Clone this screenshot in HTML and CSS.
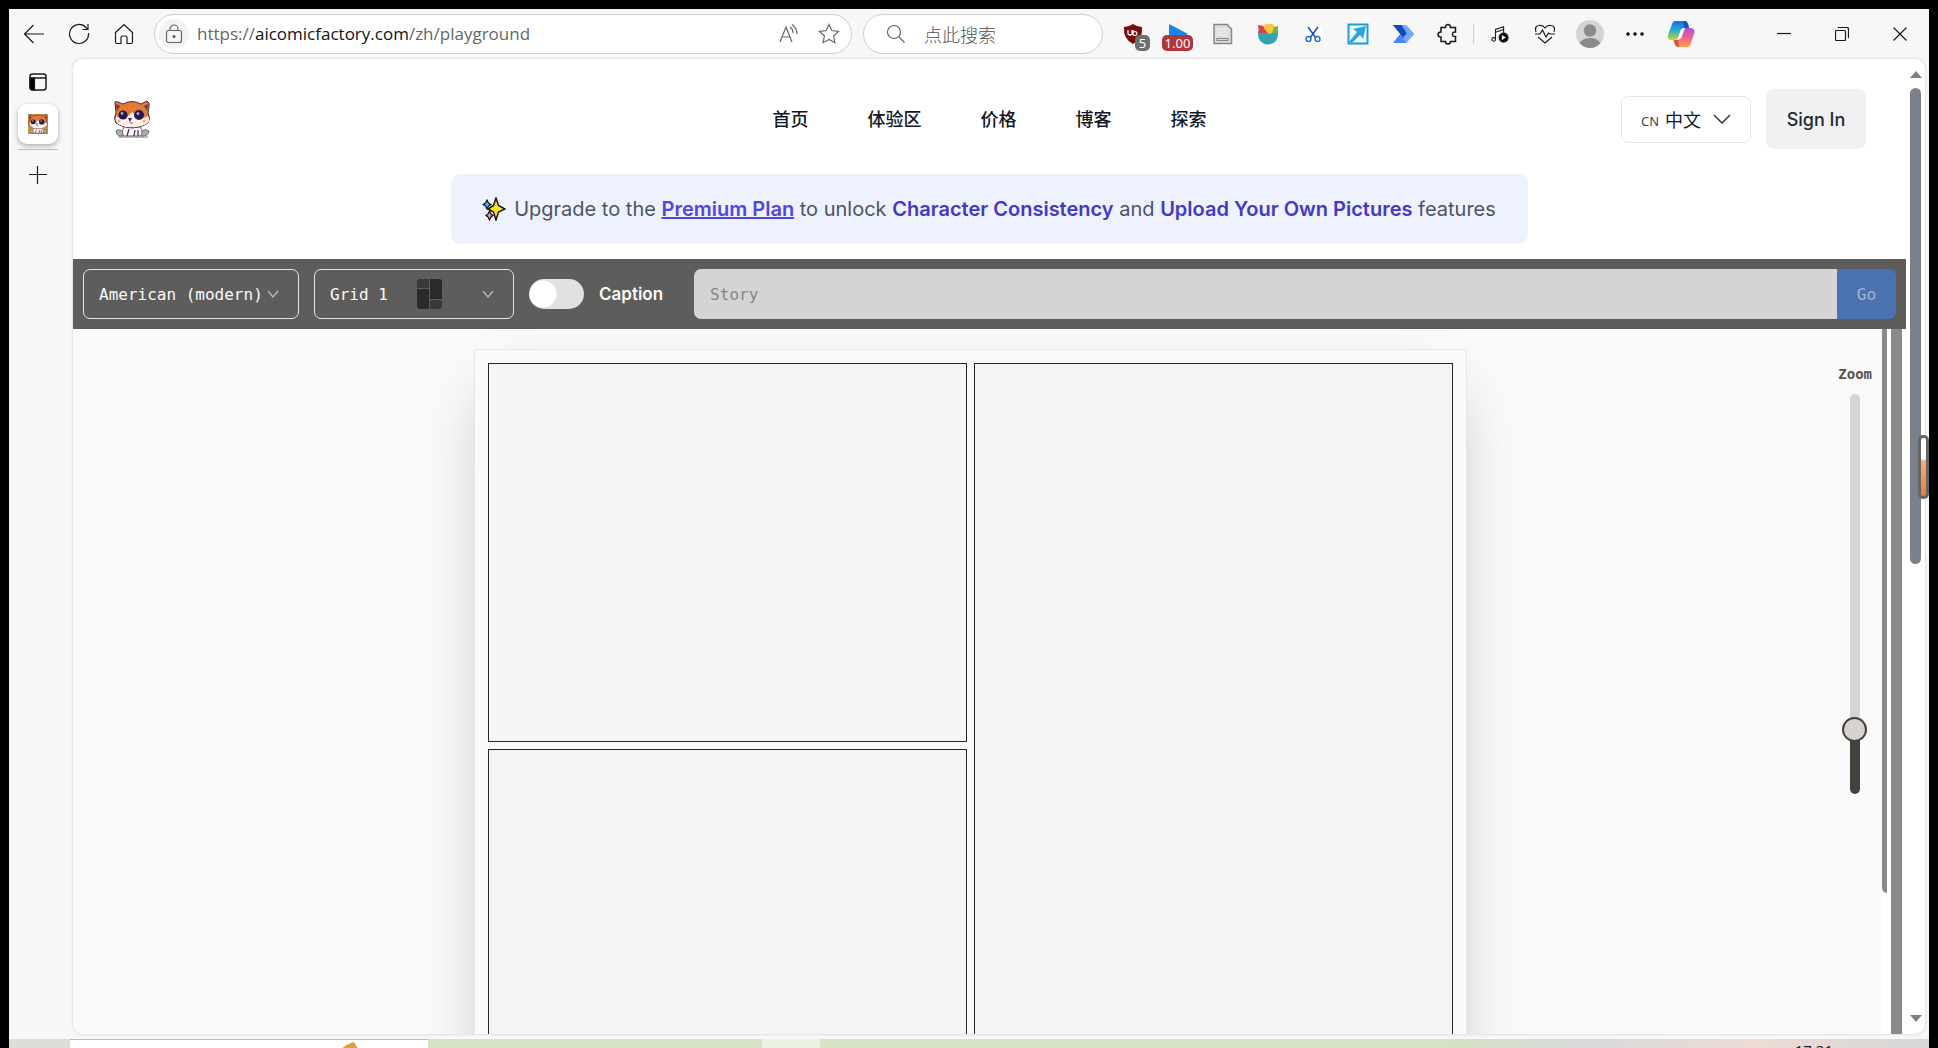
FILE: index.html
```html
<!DOCTYPE html>
<html lang="zh">
<head>
<meta charset="utf-8">
<title>AI Comic Factory</title>
<link rel="stylesheet" href="styles.css">
</head>
<body>
<svg class="defs" aria-hidden="true">
  <symbol id="cat" viewBox="0 0 38 38">
    <path d="M10 36Q4 37 3 31Q6 28 10 32ZM28 36Q35 37 36 31Q32 28 28 32Z" fill="#a9b3ae" stroke="#5d5870" stroke-width=".8"/>
    <path d="M11 26Q8 34 11 36H27Q31 34 27 26Z" fill="#fdf6f4" stroke="#6b5368" stroke-width=".9"/>
    <path d="M16 29L14 36M22 30L21 36M25 30V36" stroke="#342a5c" stroke-width="1.2" fill="none"/>
    <path d="M2 3Q1 1 5 2L10 4Q19 -1 28 4L34 1Q37 2 36 7L35 13Q38 19 35 23Q28 28 19 28Q10 28 3 23Q0 19 3 13Z" fill="#e27b36" stroke="#4b2b44" stroke-width="1"/>
    <path d="M3 4L7 6L4 11ZM35 4L31 6L34 11Z" fill="#66394c" stroke="none"/>
    <path d="M3 16Q7 19 13 18L19 12L25 18Q31 19 35 16Q38 21 33 24Q26 28 19 27Q10 28 4 23Q2 20 3 16Z" fill="#fff0ea" stroke="none"/>
    <circle cx="10" cy="15" r="4.6" fill="#26194d" stroke="none"/><circle cx="26" cy="15" r="5" fill="#26194d" stroke="none"/>
    <circle cx="9" cy="13.5" r="1.4" fill="#a8a3d8" stroke="none"/><circle cx="25" cy="13.5" r="1.5" fill="#a8a3d8" stroke="none"/>
    <path d="M15 18H19L17 22Z" fill="#39265b" stroke="none"/><path d="M17 22Q17 24 20 23" stroke="#754052" stroke-width=".8" fill="none"/>
    <circle cx="6" cy="21" r="1.5" fill="#f5a29d" stroke="none"/><circle cx="31" cy="21" r="1.5" fill="#f5a29d" stroke="none"/>
    <path d="M5 37H35" stroke="#8b7282" stroke-width="1"/>
  </symbol>
</svg>

<div class="browser">
  <header class="toolbar">
    <button class="tool" aria-label="Back"><svg width="22" height="22" viewBox="0 0 22 22"><path d="M21 11H1.500M10.500 2L1.500 11L10.500 20"/></svg></button>
    <button class="tool" aria-label="Reload"><svg width="22" height="22" viewBox="0 0 22 22"><path d="M20.500 10A9.500 9.500 0 1 1 18 4.500L20 6.500M20 1V6.500H14.500"/></svg></button>
    <button class="tool" aria-label="Home"><svg width="22" height="22" viewBox="0 0 22 22"><path d="M2.500 9.500L11 1.500L19.500 9.500V19Q19.500 20.500 18 20.500H14V14.500Q14 13 12.500 13H9.500Q8 13 8 14.500V20.500H4Q2.500 20.500 2.500 19Z"/></svg></button>
    <div class="address">
      <span class="lock"><svg width="18" height="20" viewBox="0 0 18 20"><rect x="1.500" y="6.500" width="15" height="12" rx="2"/><path d="M5 6.500V5A4 4 0 0 1 13 5V6.500"/><circle cx="9" cy="12.500" r="1" class="solid"/></svg></span>
      <div class="url">https://<b>aicomicfactory.com</b>/zh/playground</div>
      <button class="inbar" aria-label="Read aloud"><svg width="22" height="22" viewBox="0 0 22 22"><path d="M2 19L8 4L14 19M4 14H12M12 4Q15 6 15 10M14 1.500Q19 5 19 11"/></svg></button>
      <button class="inbar" aria-label="Favorite"><svg width="22" height="22" viewBox="0 0 22 22"><path d="M11 1.500L13.800 7.500L20.500 8.400L15.600 13L16.900 19.700L11 16.500L5.100 19.700L6.400 13L1.500 8.400L8.200 7.500Z"/></svg></button>
    </div>
    <label class="search">
      <svg width="20" height="20" viewBox="0 0 20 20"><circle cx="8" cy="8" r="6.500"/><path d="M13 13L18.500 18.500"/></svg>
      <input type="search" placeholder="点此搜索" aria-label="点此搜索">
    </label>
    <div class="extensions">
      <button class="tool" aria-label="uBlock"><svg width="20" height="22" viewBox="0 0 20 22"><path d="M10 1Q14 4 19 4Q20 16 10 21Q0 16 1 4Q6 4 10 1Z" fill="#7d0a0d" stroke="none"/><path d="M5 7V11Q7 13 9 11V7M10 7V12M10 10A2 2 0 1 0 12 8.500Q10 8.500 10 10" stroke="#fff"/></svg><span class="badge grey">5</span></button>
      <button class="tool" aria-label="Video speed"><svg width="20" height="22" viewBox="0 0 20 22"><path d="M1 1L20 11L1 21Z" fill="#1587ee" stroke="none"/></svg><span class="badge red">1.00</span></button>
      <button class="tool" aria-label="Reader"><svg width="20" height="22" viewBox="0 0 20 22"><path d="M1 1.500H14L18.500 6V20.500H1Z" fill="#dedede" stroke="#888" stroke-width="1.500"/><path d="M4 6H14M4 9H15M4 12H15" stroke="#f4f4f4"/><path d="M4 15.500H15V17.500H4Z" stroke="#888" fill="none"/></svg></button>
      <button class="tool" aria-label="Palette"><svg width="22" height="22" viewBox="0 0 22 22"><path d="M1 8H21Q22 21 11 21.500Q0 21 1 8Z" fill="#32a3b2" stroke="none"/><path d="M1 2L7 3L11 10L2 10Z" fill="#da3f43" stroke="none"/><path d="M6 3Q12 -2 18 3V9L12 11L8 7Z" fill="#f9c83d" stroke="none"/><path d="M17 4L21 3V10L15 10Z" fill="#6eb454" stroke="none"/></svg></button>
      <button class="tool" aria-label="Snip"><svg width="22" height="22" viewBox="0 0 22 22"><rect x="3" y="3" width="17" height="17" fill="#fff" stroke="none"/><path d="M6 4L14 15M16 4L8 15" stroke="#1d4fc0" stroke-width="1.500"/><circle cx="6.500" cy="16" r="2.500" stroke="#2770df" stroke-width="1.500"/><circle cx="15.500" cy="16" r="2.500" stroke="#2770df" stroke-width="1.500"/></svg></button>
      <button class="tool" aria-label="Open in window"><svg width="22" height="22" viewBox="0 0 22 22"><rect x="1.500" y="1.500" width="19" height="19" fill="#effbff" stroke="#239bd6" stroke-width="2"/><path d="M19 3L16 16L13 12L5 20L2 19L10 9L6 6Z" fill="#27a7dc" stroke="none"/></svg></button>
      <button class="tool" aria-label="Automate"><svg width="22" height="20" viewBox="0 0 22 20"><path d="M1 1H14L22 10L14 19H1L8 10Z" fill="#4a87f4" stroke="none"/><path d="M1 1H9L15 9L11 13Z" fill="#1746b7" stroke="none"/><path d="M14 1L22 10L14 19L11 15L15 10L10 1Z" fill="#75a8fb" stroke="none"/></svg></button>
      <button class="tool" aria-label="Extensions"><svg class="bold" width="22" height="22" viewBox="0 0 22 22"><path d="M4 4.500H8.500Q8.500 1.500 11 1.500Q13.500 1.500 13.500 4.500H18.500V9Q15.500 8.500 15.500 11.500Q15.500 14 18.500 13.500V18.500H13.500Q13.500 21 11 21Q8.500 21 8.500 18.500H4V14Q1 14 1 11.500Q1 9 4 9Z"/></svg></button>
    </div>
    <span class="divider"></span>
    <button class="tool" aria-label="Media"><svg width="18" height="18" viewBox="0 0 20 20"><path d="M5 16V5L14 2V9M5 8L14 5"/><circle cx="3" cy="16" r="2"/><circle cx="14" cy="14" r="5" class="black"/><path d="M12 11L16.500 14L12 17Z" fill="#fff" stroke="none"/></svg></button>
    <button class="tool" aria-label="Performance"><svg width="22" height="20" viewBox="0 0 22 20" stroke-width="1.4"><path d="M2 8Q0 2 5 1.500Q9 1 11 4Q13 1 17 1.500Q22 2 20 8M1 10H6L8.500 6L12 13L14.500 9L16 10H21M4 13L11 19L18 13"/></svg></button>
    <button class="tool" aria-label="Profile"><svg width="28" height="28" viewBox="0 0 28 28"><circle cx="14" cy="14" r="14" fill="#d5d4d3" stroke="none"/><circle cx="14" cy="10.500" r="6.200" fill="#8c8b89" stroke="none"/><path d="M3.500 23Q7 18 14 18Q21 18 24.500 23Q20 28 14 28Q8 28 3.500 23Z" fill="#8c8b89" stroke="none"/></svg></button>
    <button class="tool" aria-label="Settings"><svg width="20" height="6" viewBox="0 0 20 6"><g class="black"><circle cx="3" cy="3" r="1.200"/><circle cx="10" cy="3" r="1.200"/><circle cx="17" cy="3" r="1.200"/></g></svg></button>
    <button class="tool copilot" aria-label="Copilot">
      <svg width="28" height="28" viewBox="0 0 28 28">
        <defs>
          <linearGradient id="cool" x1="0" y1="0" x2="0" y2="1"><stop offset="0" stop-color="#176fe0"/><stop offset=".5" stop-color="#23b0cf"/><stop offset="1" stop-color="#c8d62b"/></linearGradient>
          <linearGradient id="warm" x1="0" y1="0" x2="0" y2="1"><stop offset="0" stop-color="#a751df"/><stop offset=".5" stop-color="#f3608e"/><stop offset="1" stop-color="#ffa448"/></linearGradient>
        </defs>
        <path d="M8 1H18Q20 1 21 4L22 8H17Q14 8 13 12L11 18Q10 20 7 20H3Q0 19 1 15L5 4Q6 1 8 1Z" fill="url(#cool)" stroke="none"/>
        <path d="M20 27H11Q8 27 7 22L6 20Q10 21 12 17L15 10Q16 8 19 8H24Q29 9 27 14L24 23Q23 27 20 27Z" fill="url(#warm)" stroke="none"/>
        <path d="M16 1H18Q20 1 21 4L22 8H17Z" fill="#1754c6" stroke="none"/><path d="M7 20H11L12 27Q9 27 8 24Z" fill="#e54a37" stroke="none"/>
        <path d="M14 11Q15 8 18 8L15 16Q14 20 10 20Z" fill="#fff" stroke="none"/>
      </svg>
    </button>
    <div class="window-buttons">
      <button aria-label="Minimize"><svg width="14" height="14" viewBox="0 0 14 14"><path d="M0 6.500H14"/></svg></button>
      <button aria-label="Restore"><svg width="14" height="14" viewBox="0 0 14 14"><rect x=".5" y="3.500" width="10" height="10" rx="1"/><path d="M3 1Q3 .5 4 .5H12Q13.500 .5 13.500 2V10Q13.500 11 13 11"/></svg></button>
      <button aria-label="Close"><svg width="14" height="14" viewBox="0 0 14 14"><path d="M.5 .5L13.500 13.500M13.500 .5L.5 13.500"/></svg></button>
    </div>
  </header>

  <div class="workspace">
    <nav class="tabs" aria-label="Tabs">
      <button class="side" aria-label="Tab menu"><svg width="18" height="18" viewBox="0 0 18 18"><rect x="1" y="1" width="16" height="16" rx="2.500" stroke-width="1.500"/><path d="M1 5H17" stroke-width="1.500"/><path d="M1 5H5.500V17H3L1 15Z" class="black"/></svg></button>
      <button class="tab" aria-label="AI Comic Factory"><svg width="20" height="20"><rect width="20" height="20" fill="#c79238" stroke="none"/><use href="#cat" width="20" height="20"/></svg></button>
      <span class="rule"></span>
      <button class="side" aria-label="New tab"><svg width="18" height="18" viewBox="0 0 18 18"><path d="M0 8.500H18M8.500 0V18"/></svg></button>
    </nav>

    <div class="viewport">
      <main class="site">
        <header class="site-header">
          <a class="logo" href="#" aria-label="AI Comic Factory"><svg width="38" height="38"><use href="#cat" width="38" height="38"/></svg></a>
          <nav class="menu"><a href="#">首页</a><a href="#">体验区</a><a href="#">价格</a><a href="#">博客</a><a href="#">探索</a></nav>
          <div class="account">
            <button class="language"><small>CN</small><span>中文</span><svg width="18" height="10" viewBox="0 0 18 10"><path d="M1 1L9 9L17 1"/></svg></button>
            <button class="signin">Sign In</button>
          </div>
        </header>

        <p class="banner">
          <svg width="24" height="24" viewBox="0 0 24 24"><path d="M14 1L16.500 8.500L23 12L16.500 15L14 23L11.500 15L6 12L11.500 8.500Z" fill="#fce61c" stroke="#171717" stroke-width="1.500"/><path d="M5 3L6.500 6L9 7.500L6.500 9L5 12L3.500 9L1 7.500L3.500 6Z" fill="#55b9e8" stroke="#171717"/><path d="M7.500 14L9 17L11 18.500L9 20L7.500 23L6 20L4 18.500L6 17Z" fill="#e293b5" stroke="#171717"/></svg>
          <span>Upgrade to the <a href="#">Premium Plan</a> to unlock <strong>Character Consistency</strong> and <strong>Upload Your Own Pictures</strong> features</span>
        </p>

        <form class="controls">
          <div class="picker style-picker">
            <select aria-label="Style"><option>American (modern)</option></select>
            <svg width="12" height="8" viewBox="0 0 12 8"><path d="M1 1L6 7L11 1"/></svg>
          </div>
          <div class="picker grid-picker">
            <select aria-label="Layout"><option>Grid 1</option></select>
            <span class="layout-icon"><i></i><i></i><i></i><i></i></span>
            <svg width="12" height="8" viewBox="0 0 12 8"><path d="M1 1L6 7L11 1"/></svg>
          </div>
          <label class="caption"><input type="checkbox"><span>Caption</span></label>
          <div class="prompt">
            <input type="text" placeholder="Story" aria-label="Story">
            <button type="button">Go</button>
          </div>
        </form>

        <div class="canvas">
          <div class="stage">
            <section class="comic">
              <div class="panel"></div><div class="panel tall"></div><div class="panel"></div><div class="panel"></div>
            </section>
          </div>
          <div class="stage-scroll"><span></span></div>
          <div class="frame-scroll"></div>
          <div class="zoom">
            <label for="zoom">Zoom</label>
            <input id="zoom" type="range" min="0" max="100" value="14">
          </div>
        </div>
      </main>
      <div class="page-scroll"><span class="up"></span><span class="thumb"></span><span class="down"></span></div>
    </div>
  </div>
  <span class="battery"></span>
</div>

<footer class="taskbar"><div class="task-window"><svg width="18" height="14" viewBox="0 0 18 14"><path d="M0 9Q8 2 14 1L18 8V14H0Z" fill="#e79a3c"/><path d="M3 10L12 7V14H3Z" fill="#3d301f"/></svg></div><div class="task-item"></div><time>17:21</time></footer>
</body>
</html>
```
FILE: styles.css
```css
* { box-sizing: border-box; }
body {
  margin: 0;
  height: 100vh;
  padding: 9px 9px 0;
  display: flex;
  flex-direction: column;
  overflow: hidden;
  background: #000;
  font-family: Inter, "Noto Sans CJK SC", sans-serif;
  color: #111827;
}
button { border: 0; padding: 0; background: none; font: inherit; color: inherit; display: flex; align-items: center; justify-content: center; }
button, a, select { cursor: pointer; }
svg { display: block; flex: none; fill: none; stroke: #1b1b1b; stroke-width: 1.2; }
.bold { stroke-width: 1.5; }
.black, .solid { fill: #000; }
.defs { position: absolute; width: 0; height: 0; }

/* Browser chrome */
.browser { position: relative; flex: 1; min-height: 0; display: flex; flex-direction: column; background: #f7f7f7; }
.toolbar { height: 50px; flex: none; display: flex; align-items: center; padding: 0 0 1px 2px; }
.tool { width: 45px; height: 45px; flex: none; position: relative; }
.address, .search { height: 40px; border: 1px solid #cfcfcf; border-radius: 20px; background: #fff; display: flex; align-items: center; }
.address { flex: 1; min-width: 0; margin: 0 11px 0 8px; padding: 0 2px 0 4px; color: #666; }
.address svg, .search svg { stroke: #666; }
.lock { width: 30px; height: 30px; border-radius: 15px; background: #f3f3f3; display: flex; align-items: center; justify-content: center; }
.url { flex: 1; padding-left: 8px; font: 17px/24px "Open Sans", sans-serif; white-space: nowrap; overflow: hidden; }
.url b { font-weight: 400; color: #111; }
.inbar { width: 40px; height: 36px; }
.search { width: 240px; padding-left: 22px; gap: 18px; }
.search input { width: 160px; border: 0; outline: 0; padding: 0; background: none; font: 300 18px/24px "Noto Sans CJK SC", sans-serif; color: #666; }
.search input::placeholder { color: #555; opacity: 1; }
.extensions { display: flex; margin-left: 7px; }
.badge { position: absolute; top: 24px; border-radius: 5px; color: #fff; font: 13px/16px "Noto Sans", sans-serif; }
.grey { left: 25px; width: 15px; background: #6a706e; }
.red { left: 7px; width: 31px; background: #b2353a; }
.divider { width: 1px; height: 20px; margin: 0 3px; background: #ccc; }
.copilot { width: 48px; }
.window-buttons { display: flex; margin-left: 50px; }
.window-buttons button { width: 58px; height: 48px; }

.workspace { flex: 1; min-height: 0; display: flex; padding: 0 4px 5px 0; }
.tabs { width: 64px; flex: none; display: flex; flex-direction: column; align-items: center; padding: 1px 6px 0 0; }
.side { width: 40px; height: 44px; }
.tab { width: 40px; height: 40px; border-radius: 9px; background: #fff; box-shadow: 0 2px 5px rgba(0,0,0,.3); }
.rule { width: 40px; height: 1px; margin: 5px 0 3px; background: #bbb; }
.viewport { flex: 1; min-width: 0; display: flex; overflow: hidden; border-radius: 10px; background: #fff; box-shadow: 0 0 2px 1px #e0e0e0; }

.page-scroll { width: 19px; flex: none; display: flex; flex-direction: column; align-items: center; padding: 12px 0; }
.up, .down { border: 6px solid transparent; }
.up { border-top: 0; border-bottom: 7px solid #7b818b; }
.down { border-bottom: 0; border-top: 7px solid #7b818b; margin-top: auto; }
.page-scroll .thumb { width: 11px; height: 50%; margin-top: 10px; border-radius: 6px; background: #7b818b; }
.battery { position: absolute; right: 0; top: 426px; width: 11px; height: 64px; border: 3px solid #666; border-radius: 5px; background: linear-gradient(#fff 35%, #f6ae77 40%, #ef7b3b); }

/* Site */
.site { flex: 1; min-width: 0; display: flex; flex-direction: column; }
.site-header { display: grid; grid-template-columns: 1fr auto 1fr; align-items: center; padding: 30px 40px 25px; }
.logo { justify-self: start; }
.menu { display: flex; gap: 59px; padding-bottom: 2px; font: 500 18px/24px "Noto Sans CJK SC", sans-serif; }
.menu a { color: #111827; text-decoration: none; }
.account { display: flex; align-items: center; justify-self: end; gap: 15px; }
.language { width: 130px; height: 47px; gap: 6px; border: 1px solid #e5e7eb; border-radius: 7px; font: 18px/24px "Noto Sans CJK SC", sans-serif; }
.language small { padding-top: 3px; font: 13px/24px "Noto Sans", sans-serif; color: #444; }
.language svg { margin-left: 6px; stroke: #333; stroke-width: 1.5; }
.signin { width: 100px; height: 60px; border-radius: 8px; background: #f1f1f1; font-size: 18px; font-weight: 500; color: #1f2937; }

.banner { margin: 0 auto 15px; height: 70px; padding: 0 32px 0 31px; display: flex; align-items: center; gap: 8px; border-radius: 9px; background: #eef2ff; font-size: 20px; line-height: 28px; color: #4b5563; white-space: nowrap; }
.banner strong { font-weight: 600; color: #4338ca; }
.banner a { font-weight: 600; color: #4f46e5; }

.controls { display: flex; align-items: center; gap: 15px; padding: 10px; background: #5e5d5b; position: relative; z-index: 1; }
.picker { position: relative; display: flex; align-items: center; height: 50px; }
.style-picker { width: 216px; }
.grid-picker { width: 200px; }
.picker select { width: 100%; height: 100%; appearance: none; border: 1px solid #e7e5e4; border-radius: 7px; background: none; padding: 1px 15px 0; color: #fafaf9; font: 16px/24px "DejaVu Sans Mono", monospace; }
.picker svg { position: absolute; right: 20px; stroke: #b5b3b1; stroke-width: 1.5; pointer-events: none; }
.layout-icon { position: absolute; left: 103px; width: 25px; height: 30px; display: grid; grid-template: repeat(3, 1fr) / 1fr 1fr; gap: 1px; border-radius: 3px; overflow: hidden; pointer-events: none; }
.layout-icon i { background: #2b2a29; }
.layout-icon i:nth-child(1), .layout-icon i:nth-child(4) { background: #3a3938; }
.layout-icon i:nth-child(2), .layout-icon i:nth-child(3) { grid-row: span 2; }
.caption { display: flex; align-items: center; gap: 15px; margin-right: 16px; color: #fafaf9; font-size: 17px; font-weight: 600; }
.caption input { appearance: none; width: 55px; height: 30px; margin: 0; border-radius: 15px; background: radial-gradient(circle at 14px 15px, #fff 13px, #e2e1df 14px); }
.prompt { flex: 1; min-width: 0; height: 50px; display: flex; border-radius: 7px; overflow: hidden; font: 16px/24px "DejaVu Sans Mono", monospace; }
.prompt input { flex: 1; min-width: 0; border: 0; padding: 1px 16px 0; background: #d4d4d4; font: inherit; }
.prompt input::placeholder { color: #858585; opacity: 1; }
.prompt button { width: 59px; padding-top: 1px; background: #4a72b0; color: #a3b5d1; }

.canvas { position: relative; flex: 1; min-height: 0; display: flex; overflow: hidden; background: #fff; }
.stage { flex: 1; min-width: 0; display: flex; justify-content: center; align-items: flex-start; padding: 20px 15px 0 0; overflow: hidden; background: #fafafa; }
.comic { flex: 0 1 993px; display: grid; grid-template-columns: 1fr 1fr; grid-auto-rows: 379px; gap: 7px; padding: 13px; border: 1px solid #e5e7eb; background: #fafafa; box-shadow: 0 31px 62px -15px rgba(0,0,0,.25); }
.panel { border: 1px solid #262626; background: #f3f4f6; }
.panel:first-child { background: #f5f5f5; }
.tall { grid-row: span 2; }
.stage-scroll { width: 5px; margin-right: 4px; }
.stage-scroll span { display: block; height: 80%; border-radius: 0 0 0 5px; background: #8a8a8a; }
.frame-scroll { width: 11px; margin-right: 4px; background: #8a8a8a; }

.zoom { position: absolute; top: 35px; right: 34px; display: flex; flex-direction: column; align-items: center; gap: 10px; }
.zoom label { font: bold 14px/20px "DejaVu Sans Mono", monospace; color: #57534e; }
.zoom input { appearance: none; writing-mode: vertical-lr; direction: rtl; width: 25px; height: 400px; margin: 0; background: none; }
.zoom input::-webkit-slider-runnable-track { width: 10px; border-radius: 5px; background: linear-gradient(#d6d3d1 84%, #44403c 84%); }
.zoom input::-webkit-slider-thumb { appearance: none; width: 25px; height: 25px; margin-left: -8px; border: 2px solid #44403c; border-radius: 50%; background: #d6d3d1; }

/* Desktop taskbar, mostly below the fold */
.taskbar { height: 9px; flex: none; display: flex; align-items: flex-start; overflow: hidden; padding-left: 61px; background: linear-gradient(90deg, #dcdfd8 3%, #d5e2c4 20%, #d5e2c4 75%, #d8dadb 82%, #ecdcd4 91%, #d5d7d8); }
.task-window { width: 358px; height: 9px; border-top: 1px solid #bbb; background: #fff; }
.task-window svg { margin: 1px 0 0 270px; stroke: none; }
.task-item { width: 58px; height: 9px; margin-left: 334px; background: #ebf1e2; }
.taskbar time { margin: 2px 96px 0 auto; font: 15px/18px "Noto Sans", sans-serif; color: #222; }
```
